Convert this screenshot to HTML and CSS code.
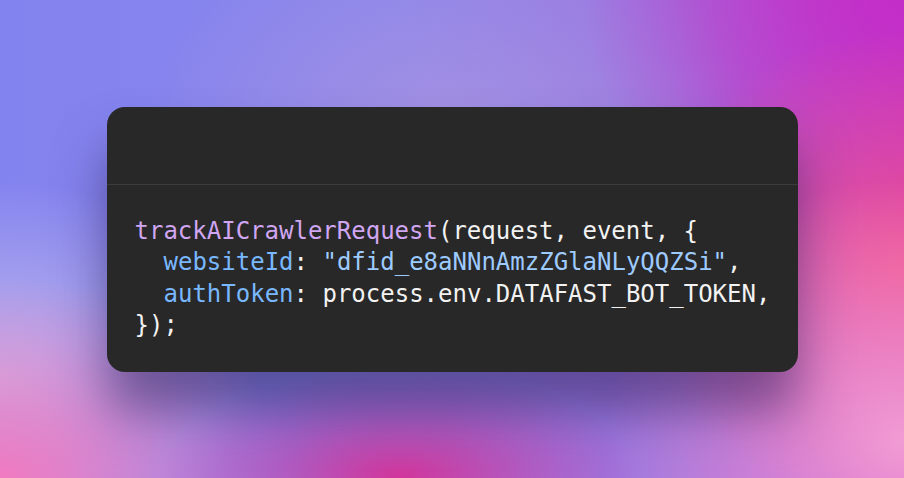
FILE: index.html
```html
<!DOCTYPE html>
<html>
<head>
<meta charset="utf-8">
<link rel="stylesheet" href="styles.css">
</head>
<body>
<main class="stage">
  <section class="window">
    <header class="window-bar"></header>
    <div class="code">
      <div class="line"><span class="fn">trackAICrawlerRequest</span><span>(request, event, {</span></div>
      <div class="line indent"><span class="key">websiteId</span><span>: </span><span class="str">"dfid_e8aNNnAmzZGlaNLyQQZSi"</span><span>,</span></div>
      <div class="line indent"><span class="key">authToken</span><span>: process.env.DATAFAST_BOT_TOKEN,</span></div>
      <div class="line"><span>});</span></div>
    </div>
  </section>
</main>
</body>
</html>
```
FILE: styles.css
```css
html, body {
  margin: 0;
  padding: 0;
}
body {
  width: 904px;
  height: 478px;
  overflow: hidden;
}
.stage {
  width: 904px;
  height: 478px;
  display: flex;
  align-items: center;
  justify-content: center;
  background:
    radial-gradient(ellipse 240px 110px at 400px 478px, rgba(214,48,150,0.95), rgba(214,48,150,0) 100%),
    radial-gradient(ellipse 300px 200px at 0px 478px, rgba(245,120,190,0.95), rgba(245,120,190,0) 100%),
    radial-gradient(ellipse 300px 260px at 904px 440px, rgba(245,165,215,0.9), rgba(245,165,215,0) 100%),
    radial-gradient(ellipse 260px 240px at 904px 270px, rgba(240,80,140,0.95), rgba(240,80,140,0) 100%),
    radial-gradient(ellipse 320px 260px at 904px 0px, rgba(195,45,200,1), rgba(195,45,200,0) 100%),
    radial-gradient(ellipse 260px 200px at 0px 380px, rgba(200,190,235,0.9), rgba(200,190,235,0) 100%),
    radial-gradient(ellipse 300px 200px at 450px 120px, rgba(165,145,225,0.9), rgba(165,145,225,0) 100%),
    linear-gradient(90deg, #8383ef 0%, #8a86ec 45%, #a072dc 75%, #c040c8 100%);
}
.window {
  width: 691px;
  height: 265px;
  background: #282828;
  border-radius: 18px;
  display: flex;
  flex-direction: column;
  box-shadow: 0 40px 50px rgba(40, 25, 80, 0.5);
}
.window-bar {
  flex: 0 0 auto;
  height: 77px;
  border-bottom: 1px solid #3c3c3c;
}
.code {
  padding: 31px 28px 0;
  font-family: "DejaVu Sans Mono", monospace;
  font-size: 24px;
  line-height: 31.5px;
  color: #f2f2f2;
}
.line {
  height: 31.5px;
  white-space: pre;
}
.indent {
  padding-left: 29px;
}
.fn { color: #d0a6f2; }
.key { color: #79b8ff; }
.str { color: #9ecbff; }
```
